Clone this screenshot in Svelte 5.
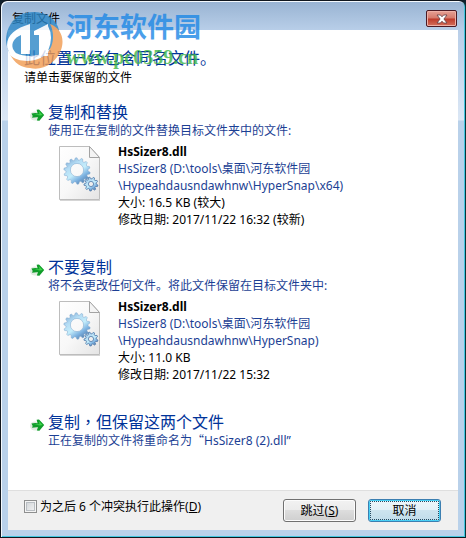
<script>
  const options = [
    {
      title: '复制和替换',
      note: '使用正在复制的文件替换目标文件夹中的文件:',
      file: {
        name: 'HsSizer8.dll',
        path: ['HsSizer8 (D:\\tools\\桌面\\河东软件园', '\\Hypeahdausndawhnw\\HyperSnap\\x64)'],
        size: '大小: 16.5 KB (较大)',
        date: '修改日期: 2017/11/22 16:32 (较新)'
      }
    },
    {
      title: '不要复制',
      note: '将不会更改任何文件。将此文件保留在目标文件夹中:',
      file: {
        name: 'HsSizer8.dll',
        path: ['HsSizer8 (D:\\tools\\桌面\\河东软件园', '\\Hypeahdausndawhnw\\HyperSnap)'],
        size: '大小: 11.0 KB',
        date: '修改日期: 2017/11/22 15:32'
      }
    },
    {
      title: '复制，但保留这两个文件',
      note: '正在复制的文件将重命名为“HsSizer8 (2).dll”',
      file: null
    }
  ];

  // Splits a string so that full-width punctuation can take its own font.
  const pieces = (text) => text.split(/([，“])/).filter(Boolean);
  const isWide = (piece) => piece === '，' || piece === '“';

  // Outline of a toothed wheel centred on cx, cy.
  function gear(cx, cy, outer, inner, teeth) {
    const points = [];
    for (let i = 0; i < teeth; i++) {
      const steps = [[0, inner], [0.22, outer], [0.5, outer], [0.72, inner]];
      for (const [t, r] of steps) {
        const a = ((i + t) / teeth) * Math.PI * 2;
        points.push(`${(cx + Math.cos(a) * r).toFixed(2)},${(cy + Math.sin(a) * r).toFixed(2)}`);
      }
    }
    return `M${points.join('L')}Z`;
  }
  const hole = (cx, cy, r) => `M${cx - r},${cy}a${r},${r} 0 1 0 ${2 * r},0a${r},${r} 0 1 0 ${-2 * r},0Z`;
  const bigGear = gear(18, 25, 13.2, 11, 14) + hole(18, 24, 6.6);
  const smallGear = gear(32, 38, 7, 5.2, 9) + hole(32, 38, 2.6);

  let applyAll = $state(false);
</script>

{#snippet rich(text)}
  {#each pieces(text) as piece}{#if isWide(piece)}<span class="wide">{piece}</span>{:else}{piece}{/if}{/each}
{/snippet}

<div class="window">
  <header class="titlebar">
    <span class="caption">复制文件</span>
    <button class="close" type="button" aria-label="关闭">
      <svg width="12" height="10" viewBox="0 0 12 10" aria-hidden="true">
        <path d="M1 1h3.400L6 2.800l1.600-1.800H11L7.900 5 11 9H7.600L6 7.200 4.400 9H1L4.100 5Z" fill="#fff" stroke="#5d3c44" stroke-width="0.8" />
      </svg>
    </button>
  </header>

  <main class="content">
    <h1>此位置已经包含同名文件。</h1>
    <p class="hint">请单击要保留的文件</p>

    <div class="options">
      {#each options as option}
        <button class="option" type="button">
          <svg class="arrow" width="15" height="14" viewBox="0 0 15 14" aria-hidden="true">
            <ellipse cx="5" cy="8" rx="5" ry="4.500" fill="#e0ebe0" />
            <path d="M1.500 5.600Q4 4.800 7.600 5.200L6.600 1.800 9 1.400 14.200 7 9.400 12.800 6.800 12.400 8 9.200Q5 9 2 9.800Q3.200 7.600 1.500 5.600Z" fill="#109c2a" />
            <path d="M4 6.200 9.600 6.300 8.800 3 12.600 7 10 7.400Z" fill="#3fd64a" />
          </svg>
          <span class="text">
            <span class="title">{@render rich(option.title)}</span>
            <span class="note">{@render rich(option.note)}</span>
            {#if option.file}
              <span class="file">
                <svg class="page" width="42" height="56" viewBox="0 0 42 56" aria-hidden="true">
                  <defs>
                    <linearGradient id="paper" x1="0" y1="0" x2="1" y2="1">
                      <stop offset="0" stop-color="#fff" />
                      <stop offset="0.5" stop-color="#f8f8f8" />
                      <stop offset="1" stop-color="#e4e4e4" />
                    </linearGradient>
                    <linearGradient id="steel" x1="0" y1="0" x2="0.7" y2="1">
                      <stop offset="0" stop-color="#6f9cca" />
                      <stop offset="0.35" stop-color="#b4dcf4" />
                      <stop offset="0.6" stop-color="#c4edfb" />
                      <stop offset="0.8" stop-color="#7fb4e2" />
                      <stop offset="1" stop-color="#547fae" />
                    </linearGradient>
                  </defs>
                  <path d="M1 54.500H41" stroke="#d5d5d5" />
                  <path d="M0.500 0.500H30.500L40.500 11.500V53.500H0.500Z" fill="url(#paper)" stroke="#bdbdbd" />
                  <path d="M30.500 0.500V11.500H40.500Z" fill="#f4f4f4" stroke="#a3a3a3" />
                  <path d={bigGear} fill="url(#steel)" stroke="#7fa6cd" stroke-width="0.5" fill-rule="evenodd" />
                  <path d={smallGear} fill="url(#steel)" stroke="#4f78a8" stroke-width="0.8" fill-rule="evenodd" />
                </svg>
                <span class="details">
                  <strong>{option.file.name}</strong>
                  {#each option.file.path as line}
                    <span class="path">{line}</span>
                  {/each}
                  <span>{option.file.size}</span>
                  <span>{option.file.date}</span>
                </span>
              </span>
            {/if}
          </span>
        </button>
      {/each}
    </div>
  </main>

  <footer class="actions">
    <label class="apply">
      <input type="checkbox" bind:checked={applyAll} />
      <span>为之后 6 个冲突执行此操作(<u>D</u>)</span>
    </label>
    <button class="push" type="button">跳过(<u>S</u>)</button>
    <button class="push default" type="button">取消</button>
  </footer>

  <div class="watermark">
    <svg width="58" height="60" viewBox="0 0 58 60" aria-hidden="true">
      <path d="M1 28C2 12 13 1 28 1C42 1 51 8 54 19L46 46H8C4 42 1 36 1 28Z" fill="#2b86c6" />
      <path d="M45 13C56 17 60 28 56 39C51 52 38 60 25 57C17 57 9 52 5 43C14 50 32 51 41 43C49 36 50 22 45 13Z" fill="#f19a50" />
      <path d="M43 15Q49 26 43 40L40 44Z" fill="#fff" />
      <path d="M2 34C2 24 11 17 25 13V43H16V24C9 27 6 32 8 38L12 44C6 43 2 39 2 34Z" fill="#fff" />
      <path d="M29 20 43 13V45H34V24H29Z" fill="#fff" />
      <path d="M2 35C10 46 31 49 45 38C38 51 16 54 5 44Z" fill="#fff" />
    </svg>
    <div class="brand">
      <span class="site">河东软件园</span>
      <span class="url">www.pc0359.cn</span>
    </div>
  </div>
</div>

<style>
  :global(body) {
    margin: 0;
    background: #10202c;
  }

  .window {
    position: relative;
    box-sizing: border-box;
    min-height: 100vh;
    display: flex;
    flex-direction: column;
    padding: 0 6px 6px;
    border: 1px solid #10161e;
    border-right-color: #06363a;
    border-radius: 7px 7px 0 0;
    box-shadow: inset 1px 1px #f4f9fd, inset -1px -1px #43c6df;
    background: linear-gradient(#98b3d2 0, #b9cfe9 30px, #dbe7f5 119px, #b9d1ea 120px);
    font: 12px/17px "Noto Sans", "Noto Sans CJK SC", sans-serif;
    color: #000;
  }

  button {
    font: inherit;
    color: inherit;
  }

  .titlebar {
    display: flex;
    justify-content: space-between;
    align-items: flex-start;
    height: 20px;
    padding: 9px 2px 0 5px;
  }

  .close {
    display: flex;
    align-items: center;
    justify-content: center;
    width: 31px;
    height: 17px;
    padding: 0;
    border: 1px solid #4b1a24;
    border-radius: 2px;
    box-shadow: inset 0 0 0 1px #eeb0a6;
    background: linear-gradient(#e6a195 0, #d5796b 48%, #bd3929 52%, #d4705c 100%);
  }

  .content {
    flex: 1;
    margin: 0 1px;
    padding: 17px 16px 20px;
    background: #fff;
  }

  h1 {
    margin: 0;
    font-size: 16px;
    font-weight: 400;
    line-height: 22px;
    color: #039;
  }

  .hint {
    margin: 0;
  }

  .options {
    display: flex;
    flex-direction: column;
    gap: 29px;
    margin-top: 16px;
  }

  .option {
    display: flex;
    align-items: flex-start;
    gap: 3px;
    padding: 0 0 0 6px;
    border: 0;
    background: none;
    text-align: left;
  }

  .arrow {
    flex: none;
    margin-top: 6px;
  }

  .text {
    flex: 1;
    display: flex;
    flex-direction: column;
  }

  .title {
    font-size: 16px;
    line-height: 20px;
    color: #039;
  }

  .wide {
    font-family: "Noto Sans CJK TC", sans-serif;
    line-height: 1;
  }

  .note,
  .path {
    color: #1c3f94;
  }

  .file {
    display: flex;
    gap: 17px;
    margin-top: 4px;
    padding-left: 11px;
  }

  .page {
    flex: none;
    margin-top: 3px;
  }

  .details {
    display: flex;
    flex-direction: column;
  }

  .actions {
    display: flex;
    align-items: flex-start;
    gap: 12px;
    margin: 0 1px 1px;
    padding: 8px 17px 8px 16px;
    border-top: 1px solid #dfdfdf;
    background: #f0f0f0;
  }

  .apply {
    display: flex;
    align-items: center;
    gap: 3px;
    margin-right: auto;
    line-height: 15px;
  }

  .apply input {
    appearance: none;
    box-sizing: border-box;
    width: 13px;
    height: 13px;
    margin: 0;
    border: 1px solid #8e8f8f;
    box-shadow: inset 0 0 0 1px #f4f4f4, inset 0 0 0 2px #b9bec3;
    background: linear-gradient(135deg, #cdd1d5, #f6f6f6);
  }

  .apply input:checked {
    background: #2b5a9b;
  }

  .push {
    box-sizing: border-box;
    width: 73px;
    height: 23px;
    padding: 0;
    border: 1px solid #707070;
    border-radius: 3px;
    box-shadow: inset 0 0 0 1px #fcfcfc;
    background: linear-gradient(#f2f2f2 0, #ebebeb 50%, #ddd 50%, #cfcfcf 100%);
    line-height: 19px;
  }

  .default {
    border-color: #3c7fb1;
    outline: 1px dotted #244a60;
    outline-offset: -3px;
    box-shadow: inset 0 0 0 1px #48d0f5;
    background: linear-gradient(#eef6fa 0, #e2f0f7 50%, #cde4ef 50%, #c0dcea 100%);
  }

  .watermark {
    position: absolute;
    top: 10px;
    left: 4px;
    display: flex;
    gap: 3px;
    pointer-events: none;
    opacity: 0.8;
  }

  .brand {
    display: flex;
    flex-direction: column;
    white-space: nowrap;
  }

  .site {
    font-size: 27px;
    font-weight: 700;
    line-height: 32px;
    color: #1e88e5;
  }

  .url {
    font: 700 20px/28px "Liberation Serif", serif;
    color: #41b649;
  }
</style>
